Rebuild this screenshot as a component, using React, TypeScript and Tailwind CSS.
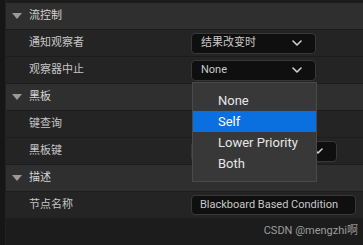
import React from "react";

const cjk = "font-['Roboto','Noto_Sans_CJK_SC',sans-serif]";

const Chevron = () => (
  <svg width="10" height="6" viewBox="0 0 10 6" fill="none">
    <polyline
      points="1,1 5,5 9,1"
      stroke="#d0d0d0"
      strokeWidth="1.6"
      strokeLinecap="round"
      strokeLinejoin="round"
    />
  </svg>
);

const Triangle = () => (
  <svg width="10" height="6" viewBox="0 0 10 6">
    <polygon points="0,0 10,0 5,6" fill="#9a9a9a" />
  </svg>
);

const Header = ({ title }: { title: string }) => (
  <div className="h-[27px] flex items-center pl-[6px] bg-[#2f2f2f] border-b border-[#1c1c1c]">
    <Triangle />
    <span className="ml-[7px] text-[11px] text-[#d4d4d4]">{title}</span>
  </div>
);

const Row = ({ label, children }: { label: string; children?: React.ReactNode }) => (
  <div className="h-[27px] flex items-center bg-[#242424] border-b border-[#1c1c1c]">
    <span className="w-[185px] pl-[23px] text-[11px] text-[#c6c6c6]">{label}</span>
    {children}
  </div>
);

const Select = ({ value, width }: { value: string; width: string }) => (
  <div
    className={`${width} h-[21px] flex items-center justify-between pl-[9px] pr-[13px] rounded-[4px] bg-[#0f0f0f] border border-[#383838] text-[11px] text-[#c8c8c8]`}
  >
    <span>{value}</span>
    <Chevron />
  </div>
);

const menuItems = ["None", "Self", "Lower Priority", "Both"];

export default function App() {
  return (
    <div className={`w-[363px] h-[245px] flex bg-[#1c1c1c] overflow-hidden relative ${cjk}`}>
      <div className="w-[6px] bg-[#161616] border-r border-[#222]" />
      <div className="flex-1 flex flex-col pt-[3px]">
        <Header title="流控制" />
        <Row label="通知观察者">
          <Select value="结果改变时" width="w-[125px]" />
        </Row>
        <Row label="观察器中止">
          <Select value="None" width="w-[125px]" />
        </Row>
        <Header title="黑板" />
        <Row label="键查询" />
        <Row label="黑板键">
          <Select value="" width="w-[146px]" />
        </Row>
        <Header title="描述" />
        <Row label="节点名称">
          <div className="w-[165px] h-[20px] flex items-center pl-[8px] rounded-[4px] bg-[#0f0f0f] border border-[#383838] text-[11px] text-[#c8c8c8]">
            Blackboard Based Condition
          </div>
        </Row>
        <div className="flex-1 flex justify-end items-start pr-[5px] pt-[4px]">
          <span className="text-[11px] text-[#9c9c9c]">CSDN @mengzhi啊</span>
        </div>
      </div>

      <div className="absolute left-[192px] top-[82px] w-[125px] h-[100px] bg-[#383838] border border-[#4a4a4a] pt-[7px]">
        {menuItems.map((item) => (
          <div
            key={item}
            className={`h-[21px] flex items-center pl-[25px] text-[13px] ${
              item === "Self" ? "bg-[#0a70df] text-white" : "text-[#e6e6e6]"
            }`}
          >
            {item}
          </div>
        ))}
      </div>
    </div>
  );
}
